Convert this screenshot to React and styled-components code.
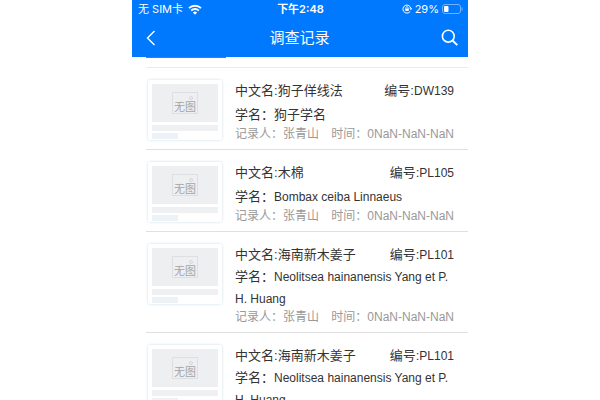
import React from 'react';
import styled, { createGlobalStyle } from 'styled-components';

const GlobalStyle = createGlobalStyle`
  * {
    box-sizing: border-box;
  }
  body {
    margin: 0;
    background: #fff;
    font-family: "Liberation Sans", "Noto Sans CJK SC", sans-serif;
  }
`;

const Screen = styled.div`
  display: flex;
  flex-direction: column;
  width: 56%;
  min-width: 336px;
  height: 100vh;
  margin: 0 auto;
  overflow: hidden;
`;

const Header = styled.header`
  flex: none;
  background: #0079fe;
  color: #fff;
`;

const StatusBar = styled.div`
  display: grid;
  grid-template-columns: 1fr auto 1fr;
  align-items: center;
  height: 18px;
  padding: 0 5px 0 6px;
  font-family: Inter, "Noto Sans CJK SC", sans-serif;
  font-size: 11px;
  line-height: 18px;
`;

const StatusGroup = styled.div`
  display: flex;
  align-items: center;
  justify-content: ${props => props.$end ? 'flex-end' : 'flex-start'};
  gap: ${props => props.$gap}px;
`;

const Clock = styled.time`
  font-weight: 600;
`;

const NavBar = styled.div`
  display: flex;
  align-items: center;
  justify-content: space-between;
  height: 39px;
  padding: 0 9px 0 12px;
`;

const Title = styled.h1`
  margin: 0;
  font-size: 15px;
  line-height: 20px;
  font-weight: 400;
`;

const IconButton = styled.button`
  display: flex;
  padding: 0;
  border: 0;
  background: none;
  color: inherit;
`;

const List = styled.ul`
  flex: 1;
  min-height: 0;
  margin: 0;
  padding: 0 0 0 14px;
  overflow: hidden;
  list-style: none;
`;

// bottom edge of the record scrolled under the header
const Passed = styled.li`
  height: 11px;
  border-bottom: 1px solid #ebebeb;

  &::before {
    content: "";
    display: block;
    width: 80px;
    height: 1px;
    background: #2b86e0;
  }
`;

const Item = styled.li`
  display: flex;
  align-items: stretch;
  gap: 13px;
  padding: 11px 14px 8px 2px;
  border-bottom: 1px solid #e0e0e0;
`;

const Thumb = styled.div`
  flex: none;
  width: 74px;
  height: 60px;
  margin: 1px 0;
  padding: 4px;
  border-radius: 2px;
  background: #fff;
  box-shadow: 0 0 3px #c9dde8;
`;

const Picture = styled.div`
  display: grid;
  place-items: center;
  height: 38px;
  background: #eeeff1;
`;

const Bar = styled.div`
  width: ${props => props.$short ? '26px' : '100%'};
  height: 6px;
  margin-top: ${props => props.$short ? 2 : 3}px;
  background: ${props => props.$short ? '#edf2f6' : '#eff0f2'};
`;

const Details = styled.div`
  display: flex;
  flex: 1;
  flex-direction: column;
  justify-content: space-between;
  min-width: 0;
  color: #333;
  font-size: 13px;
`;

const Line = styled.div`
  display: flex;
  justify-content: space-between;
  line-height: 23px;
`;

const ScientificName = styled.div`
  line-height: 22px;
`;

const Latin = styled.span`
  font-size: 12px;
  line-height: 1;
`;

const Meta = styled(Line)`
  color: #999;
  font-size: 12px;
  line-height: 14px;
`;

const records = [
  { id: 1, name: '狗子佯线法', code: 'DW139', scientific: '狗子学名', local: true },
  { id: 2, name: '木棉', code: 'PL105', scientific: 'Bombax ceiba Linnaeus' },
  { id: 3, name: '海南新木姜子', code: 'PL101', scientific: 'Neolitsea hainanensis Yang et P. H. Huang' },
  { id: 4, name: '海南新木姜子', code: 'PL101', scientific: 'Neolitsea hainanensis Yang et P. H. Huang' },
];

function WifiIcon() {
  return (
    <svg width="14" height="11" viewBox="0 0 14 11" fill="none" stroke="currentColor" strokeWidth="1.9">
      <path d="M1 4.2a8.5 8.5 0 0 1 12 0" />
      <path d="M3.2 6.6a5.4 5.4 0 0 1 7.6 0" />
      <path d="M7 10.8 4.9 8.6a3 3 0 0 1 4.2 0z" fill="currentColor" stroke="none" />
    </svg>
  );
}

function LockIcon() {
  return (
    <svg width="10" height="10" viewBox="0 0 10 10" fill="none" stroke="currentColor">
      <path d="M8.2 7.4A4 4 0 1 1 8.9 4.6" />
      <path d="M7.5 4.2 9 5.6 10 4" />
      <path d="M3.9 4.6V3.7a1.1 1.1 0 0 1 2.2 0v.9" strokeWidth=".8" />
      <path d="M3.2 4.5h3.6v2.4H3.2z" fill="currentColor" stroke="none" />
    </svg>
  );
}

function BatteryIcon() {
  return (
    <svg width="21" height="10" viewBox="0 0 21 10" fill="none">
      <rect x=".5" y=".5" width="18" height="9" rx="2.5" stroke="#6fb3ff" />
      <rect x="2" y="2" width="4.5" height="6" rx="1" fill="#fff" />
      <path d="M20 3.4v3.2" stroke="#6fb3ff" />
    </svg>
  );
}

function BackIcon() {
  return (
    <svg width="14" height="18" viewBox="0 0 14 18" fill="none" stroke="currentColor" strokeWidth="1.4">
      <path d="M10.5 2 3.5 9l7 7" />
    </svg>
  );
}

function SearchIcon() {
  return (
    <svg width="18" height="18" viewBox="0 0 18 18" fill="none" stroke="currentColor" strokeWidth="1.6">
      <circle cx="7.3" cy="7.2" r="5.9" />
      <path d="m11.5 11.5 4.8 4.6" strokeWidth="1.9" />
    </svg>
  );
}

function NoImageIcon() {
  return (
    <svg width="28" height="26" viewBox="0 0 28 26" fill="none">
      <rect x="1.5" y="2.5" width="25" height="21" stroke="#dddfe2" />
      <circle cx="20" cy="8" r="1.5" stroke="#d6d8db" />
      <path d="M4 17l6-6 5 5 4-3 5 5" stroke="#e3e5e7" />
      <text x="14" y="21" textAnchor="middle" fontSize="11" fill="#a3a5a8">无图</text>
    </svg>
  );
}

function Record({ record }) {
  return (
    <Item>
      <Thumb>
        <Picture><NoImageIcon /></Picture>
        <Bar />
        <Bar $short />
      </Thumb>
      <Details>
        <Line>
          <span>中文名:{record.name}</span>
          <span>编号:<Latin>{record.code}</Latin></span>
        </Line>
        <ScientificName>
          学名：{record.local ? record.scientific : <Latin>{record.scientific}</Latin>}
        </ScientificName>
        <Meta>
          <span>记录人：张青山</span>
          <span>时间：0NaN-NaN-NaN</span>
        </Meta>
      </Details>
    </Item>
  );
}

export default function App() {
  return (
    <Screen>
      <GlobalStyle />
      <Header>
        <StatusBar>
          <StatusGroup $gap={5}>
            <span>无 SIM卡</span>
            <WifiIcon />
          </StatusGroup>
          <Clock>下午2:48</Clock>
          <StatusGroup $end $gap={3}>
            <LockIcon />
            <span>29%</span>
            <BatteryIcon />
          </StatusGroup>
        </StatusBar>
        <NavBar>
          <IconButton type="button" aria-label="返回"><BackIcon /></IconButton>
          <Title>调查记录</Title>
          <IconButton type="button" aria-label="搜索"><SearchIcon /></IconButton>
        </NavBar>
      </Header>
      <List>
        <Passed />
        {records.map(record => <Record key={record.id} record={record} />)}
      </List>
    </Screen>
  );
}
